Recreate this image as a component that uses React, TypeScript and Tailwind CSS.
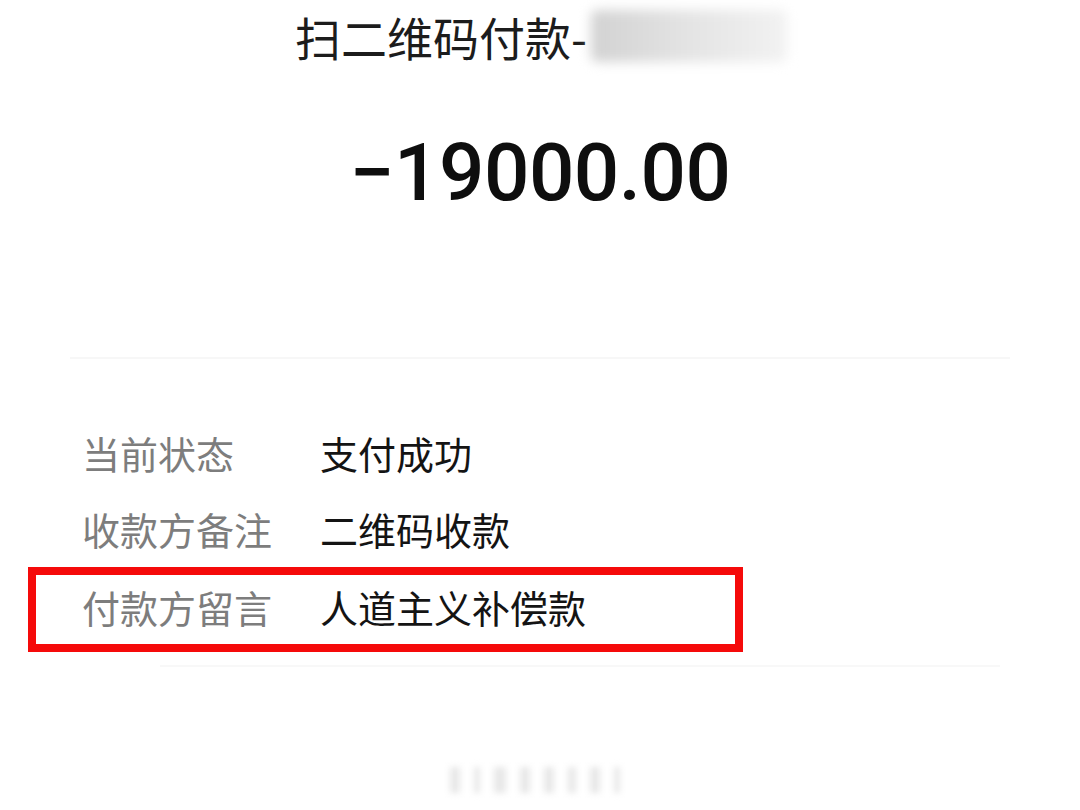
import React from 'react';

const rows = [
  { label: '当前状态', value: '支付成功' },
  { label: '收款方备注', value: '二维码收款' },
];

export default function App() {
  return (
    <div className="w-[1080px] h-[810px] bg-white overflow-hidden font-['Noto_Sans_CJK_SC','Noto_Sans',sans-serif]">
      {/* Title with blurred merchant name */}
      <div className="flex justify-center items-center h-[72px] pl-[2px]">
        <span className="text-[46px] leading-none text-[#1c1c1c]">扫二维码付款-</span>
        <div className="ml-[4px] w-[196px] h-[52px] bg-gradient-to-r from-[#d2d2d2] via-[#e4e4e4] to-[#f2f2f2] blur-[6px] rounded-md" />
      </div>

      {/* Amount */}
      <div className="mt-[61px] text-center text-[80px] leading-none font-medium text-[#0e0e0e] font-['Roboto','Noto_Sans',sans-serif] tracking-[-0.5px]">
        −19000.00
      </div>

      <div className="mt-[144px] mx-[70px] h-[2px] bg-[#f7f7f7]" />

      {/* Detail rows */}
      <div className="mt-[56px]">
        {rows.map((row) => (
          <div key={row.label} className="flex items-center h-[76px] pl-[82px] text-[38px] leading-none">
            <span className="w-[238px] text-[#7d7d7d]">{row.label}</span>
            <span className="text-[#141414]">{row.value}</span>
          </div>
        ))}

        <div className="ml-[28px] w-[715px] h-[85px] border-[8px] border-[#f50a0a] flex items-center pl-[46px] pb-[5px] text-[38px] leading-none">
          <span className="w-[238px] text-[#7d7d7d]">付款方留言</span>
          <span className="text-[#141414]">人道主义补偿款</span>
        </div>
      </div>

      <div className="mt-[13px] ml-[160px] mr-[80px] h-[2px] bg-[#f8f8f8]" />

      {/* Faint watermark */}
      <div className="mt-[100px] flex justify-center gap-[14px] pr-[10px] blur-[3px]">
        {[10, 6, 12, 10, 10, 8, 10, 6].map((w, i) => (
          <div key={i} style={{ width: w }} className="h-[26px] bg-[#e8e8e8]" />
        ))}
      </div>
    </div>
  );
}
